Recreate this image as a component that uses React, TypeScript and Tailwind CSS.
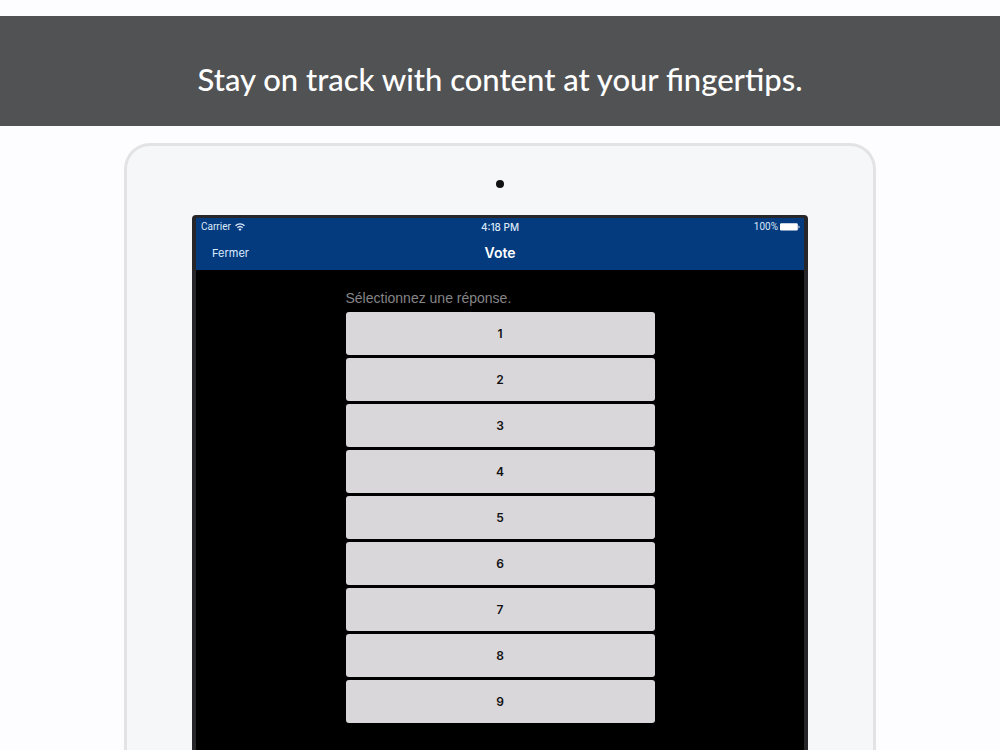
const choices = [1, 2, 3, 4, 5, 6, 7, 8, 9];

function WifiIcon() {
  return (
    <svg viewBox="0 0 20 16" className="h-2 w-[10px]" fill="none" stroke="currentColor" strokeWidth="2.6" aria-hidden="true">
      <path d="M1 5.6a12.8 12.8 0 0 1 18 0" />
      <path d="M4.6 9.6a7.8 7.8 0 0 1 10.8 0" />
      <path d="M10 15.8 6.8 12.6a4.6 4.6 0 0 1 6.4 0Z" fill="currentColor" stroke="none" />
    </svg>
  );
}

function BatteryIcon() {
  return (
    <svg viewBox="0 0 20 8" className="h-2 w-5" fill="currentColor" aria-hidden="true">
      <rect x="0" y="0.3" width="17.8" height="7.2" rx="1.2" />
      <path d="M18.5 2.4a1.6 1.6 0 0 1 0 3Z" />
    </svg>
  );
}

function StatusBar() {
  return (
    <div className="grid h-[18px] grid-cols-3 items-center px-1 text-[10px] leading-3 text-[#dbe8f8]">
      <div className="flex items-center gap-1 pl-px font-['Roboto',sans-serif]">
        <span>Carrier</span>
        <WifiIcon />
      </div>
      <span className="text-center font-medium">4:18 PM</span>
      <div className="flex items-center justify-end gap-[2px] font-['Roboto',sans-serif]">
        <span>100%</span>
        <span className="text-white">
          <BatteryIcon />
        </span>
      </div>
    </div>
  );
}

function NavBar() {
  return (
    <div className="grid h-[34px] grid-cols-3 items-center px-4 pb-px">
      <button type="button" className="justify-self-start text-[11px] leading-4 text-[#dcecff]">
        Fermer
      </button>
      <h2 className="text-center text-[14px] leading-4 font-semibold text-white">Vote</h2>
    </div>
  );
}

export default function App() {
  return (
    <div className="flex min-h-screen flex-col items-center bg-[#fdfcff] pt-4 font-['Inter','Liberation_Sans',sans-serif]">
      <header className="flex h-[110px] w-full items-center justify-center bg-[#515254] pt-4">
        <h1 className="text-center font-['Lato',sans-serif] text-[31px] leading-10 font-medium text-white">
          Stay on track with content at your fingertips.
        </h1>
      </header>

      <main className="mt-[17px] flex w-full max-w-[752px] flex-1 flex-col rounded-t-[26px] border-3 border-b-0 border-[#e3e3e5] bg-[#f6f7f9] px-[65px]">
        <div className="flex h-[69px] items-center justify-center pt-[6px]">
          <span className="size-2 rounded-full bg-[#111113]" />
        </div>

        <div className="flex flex-1 flex-col rounded-t-[4px] border-x-4 border-t-3 border-[#26262b] bg-black">
          <div className="bg-[#043a7e]">
            <StatusBar />
            <NavBar />
          </div>

          <section className="mx-auto w-full max-w-[309px] pt-[18px] pb-7">
            <p id="prompt" className="pb-1 font-['Liberation_Sans',sans-serif] text-[14px] leading-5 text-[#858587]">
              Sélectionnez une réponse.
            </p>
            <div role="group" aria-labelledby="prompt" className="flex flex-col gap-[3px]">
              {choices.map((choice) => (
                <button
                  key={choice}
                  type="button"
                  className="h-[43px] rounded-[3px] bg-[#d9d7da] text-[12px] font-semibold text-[#111113]"
                >
                  {choice}
                </button>
              ))}
            </div>
          </section>
        </div>
      </main>
    </div>
  );
}
